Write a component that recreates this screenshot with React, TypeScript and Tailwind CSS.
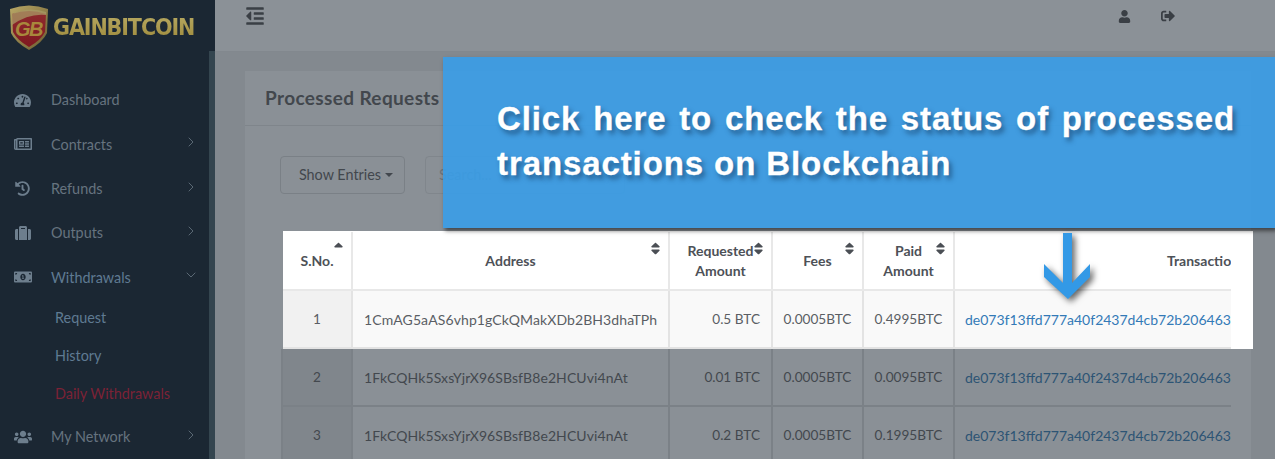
import { ChevronRight, ChevronDown } from 'lucide-react'
import { FaTachometerAlt, FaRegNewspaper, FaHistory, FaSuitcase, FaMoneyBillAlt, FaUsers, FaUser, FaSignOutAlt, FaOutdent, FaSort, FaSortUp } from 'react-icons/fa'

const lato = { fontFamily: 'Lato, sans-serif' }

const txHash = 'de073f13ffd777a40f2437d4cb72b2064630a1f7'

const rows = [
  { n: 1, address: '1CmAG5aAS6vhp1gCkQMakXDb2BH3dhaTPh', req: '0.5 BTC', paid: '0.4995BTC' },
  { n: 2, address: '1FkCQHk5SxsYjrX96SBsfB8e2HCUvi4nAt', req: '0.01 BTC', paid: '0.0095BTC' },
  { n: 3, address: '1FkCQHk5SxsYjrX96SBsfB8e2HCUvi4nAt', req: '0.2 BTC', paid: '0.1995BTC' },
]

function NavItem({ icon, label, chevron }: { icon: React.ReactNode; label: string; chevron?: 'right' | 'down' }) {
  return (
    <div className={`flex items-center h-[44.3px] pl-[14px] pr-[10px] ${chevron === 'down' ? 'text-[#5f7a92]' : 'text-[#66737f]'}`}>
      <span className="w-[37px] flex items-center text-[#6d7e8d]">{icon}</span>
      <span className="flex-1 text-[14.4px]">{label}</span>
      {chevron === 'right' && <ChevronRight size={16} strokeWidth={1.5} className="text-[#5a6874] -mt-[4px]" />}
      {chevron === 'down' && <ChevronDown size={16} strokeWidth={1.5} className="text-[#5a6874] -mt-[4px]" />}
    </div>
  )
}

function Sidebar() {
  return (
    <aside className="w-[215px] shrink-0 h-[459px] bg-[#1b2733] flex overflow-hidden">
      <div className="w-[209px]">
        <div className="h-[51px] flex items-center pl-[10px] pt-[3px]">
          <svg width="38" height="45" viewBox="0 0 38 45" className="shrink-0">
            <defs>
              <linearGradient id="rim" x1="0" y1="0" x2="1" y2="1">
                <stop offset="0" stopColor="#b9a866" />
                <stop offset="1" stopColor="#6b5c30" />
              </linearGradient>
              <linearGradient id="red" x1="0" y1="0" x2="0" y2="1">
                <stop offset="0" stopColor="#8f2b2e" />
                <stop offset="1" stopColor="#7f1820" />
              </linearGradient>
            </defs>
            <path d="M0 4 Q19 -3 38 4 L37 28 Q33 37 19 45 Q5 37 1 28 Z" fill="url(#rim)" />
            <path d="M2 9 Q19 3 36 9 L35 27 Q31 35 19 42 Q7 35 3 27 Z" fill="url(#red)" />
            <path d="M2 9 Q19 1 36 7 L36 10 Q19 8 2 20 Z" fill="#a89a66" opacity="0.75" />
            <text x="5" y="31" fontSize="20" fontWeight="700" fontStyle="italic" fill="#a8883c" fontFamily="Liberation Sans, sans-serif">G</text>
            <text x="19" y="31" fontSize="20" fontWeight="700" fontStyle="italic" fill="#a8883c" fontFamily="Liberation Sans, sans-serif">B</text>
          </svg>
          <span
            className="ml-[5px] text-[23px] font-bold tracking-[-1.1px] leading-none text-transparent bg-clip-text bg-gradient-to-b from-[#b5a75f] to-[#a08c3e]"
            style={{ fontFamily: '"DejaVu Sans Condensed", "DejaVu Sans", sans-serif' }}
          >
            GAINBITCOIN
          </span>
        </div>
        <nav className="pt-[27px]">
          <NavItem icon={<FaTachometerAlt size={17} />} label="Dashboard" />
          <NavItem icon={<FaRegNewspaper size={18} />} label="Contracts" chevron="right" />
          <NavItem icon={<FaHistory size={15} className="ml-[1px]" />} label="Refunds" chevron="right" />
          <NavItem icon={<FaSuitcase size={16} className="ml-[1px]" />} label="Outputs" chevron="right" />
          <NavItem icon={<FaMoneyBillAlt size={18} />} label="Withdrawals" chevron="down" />
          <div className="pl-[55px] text-[14.4px] text-[#5f7a92] -mt-[1px] mb-[2px]">
            <div className="h-[38px] flex items-center">Request</div>
            <div className="h-[38px] flex items-center">History</div>
            <div className="h-[38px] flex items-center text-[#7c2236]">Daily Withdrawals</div>
          </div>
          <NavItem icon={<FaUsers size={18} />} label="My Network" chevron="right" />
        </nav>
      </div>
      <div className="w-[6px] mt-[51px] bg-[#34454f]" />
    </aside>
  )
}

function HeadCell({ w, children, up }: { w: string; children: React.ReactNode; up?: boolean }) {
  return (
    <div className={`${w} shrink-0 relative flex items-center justify-center text-center font-bold leading-[20px] text-[14px] text-[#4d5157] border-r-2 border-[#e8e8e8]`}>
      {children}
      <span className="absolute top-[9px] right-[5px] text-[#4b4f55]">
        {up ? <FaSortUp size={15} /> : <FaSort size={15} />}
      </span>
    </div>
  )
}

function Row({ row, lit }: { row: (typeof rows)[number]; lit: boolean }) {
  const line = lit ? 'border-[#e3e3e3]' : 'border-[#7b8187]'
  const cell = `shrink-0 flex items-center border-r-2 ${line}`
  return (
    <div className={`flex h-[58px] border-b-2 text-[13.6px] ${line} ${lit ? 'bg-[#f9f9f9] text-[#5a5e64]' : 'text-[#43484e]'}`}>
      <div className={`${cell} w-[70px] justify-center ${lit ? 'bg-[#f1f1f1]' : 'bg-[#80868c]'}`}>{row.n}</div>
      <div className={`${cell} w-[317px] pl-[11px] text-[14px] tracking-[0.1px]`}>{row.address}</div>
      <div className={`${cell} w-[103px] justify-end pr-[11px]`}>{row.req}</div>
      <div className={`${cell} w-[91px] justify-center`}>0.0005BTC</div>
      <div className={`${cell} w-[91px] justify-center`}>{row.paid}</div>
      <div className={`pl-[10px] flex items-center whitespace-nowrap text-[14px] ${lit ? 'text-[#337ab7]' : 'text-[#2d5474]'}`}>{txHash}</div>
    </div>
  )
}

function RequestsTable() {
  return (
    <div className="ml-[38px] mt-[37px]">
      {/* header and first row are the lit part of the tour */}
      <div className="w-[970px] bg-white">
        <div className="w-[948px] overflow-hidden">
          <div className="w-[1100px]">
            <div className="flex h-[60px] pt-[1px] border-b-2 border-[#e8e8e8] bg-white">
              <HeadCell w="w-[70px]" up>S.No.</HeadCell>
              <HeadCell w="w-[317px]">Address</HeadCell>
              <HeadCell w="w-[103px]">Requested<br />Amount</HeadCell>
              <HeadCell w="w-[91px]">Fees</HeadCell>
              <HeadCell w="w-[91px]">Paid<br />Amount</HeadCell>
              <div className="pl-[212px] flex items-center font-bold text-[14px] text-[#4d5157]">Transaction</div>
            </div>
            <Row row={rows[0]} lit />
          </div>
        </div>
      </div>
      <div className="w-[950px] -ml-[2px] border-l-2 border-[#7b8187] overflow-hidden">
        <div className="w-[1100px]">
          <Row row={rows[1]} lit={false} />
          <Row row={rows[2]} lit={false} />
        </div>
      </div>
    </div>
  )
}

export default function App() {
  return (
    <div className="relative w-[1275px] h-[459px] overflow-hidden flex bg-[#83898f]" style={lato}>
      <Sidebar />
      <main className="flex-1 min-w-0">
        <header className="h-[52px] bg-[#8b9197] border-b border-[#82888e] flex items-start text-[#3a3f45]">
          <FaOutdent size={20} className="ml-[30px] mt-[6px]" />
          <div className="flex-1" />
          <FaUser size={13} className="mt-[10px]" />
          <FaSignOutAlt size={14} className="ml-[30px] mr-[100px] mt-[9px]" />
        </header>
        <section className="ml-[30px] mt-[19px] h-[400px] w-[1006px] bg-[#8a9096]">
          <div className="h-[55px] border-b border-[#7f858b] flex items-center pl-[20px] text-[19px] font-bold tracking-[0.37px] text-[#42474d]">Processed Requests</div>
          <div className="flex gap-[20px] pl-[35px] pt-[30px]">
            <div className="w-[125px] h-[38px] rounded-[4px] border border-[#7a8086] flex items-center justify-center pl-[7px] text-[14.4px] text-[#42474d]">
              Show Entries
              <span className="ml-[4px] border-x-[4px] border-t-[4px] border-x-transparent border-t-[#42474d]" />
            </div>
            <div className="w-[200px] h-[38px] rounded-[4px] border border-[#80868c] flex items-center pl-[13px] text-[14.4px] text-[#6d7379]">Search...</div>
          </div>
          <RequestsTable />
        </section>
      </main>
      {/* tour callout */}
      <div className="absolute left-[443px] top-[57px] right-0 h-[171px] bg-[#399de8]/90 shadow-[2px_3px_4px_rgba(0,0,0,0.5)] pl-[54px] pt-[39px]">
        <p
          className="w-[738px] text-[33px] font-bold leading-[45px] tracking-[0.9px] text-white text-justify [-webkit-text-stroke:0.3px_white] [text-shadow:3px_4px_5px_rgba(20,60,100,0.65)]"
          style={{ fontFamily: '"Liberation Sans", sans-serif' }}
        >
          Click here to check the status of processed transactions on Blockchain
        </p>
      </div>
      {/* arrow pointing at the hash column */}
      <svg width="46" height="66" viewBox="0 0 46 66" className="absolute left-[1044px] top-[233px] drop-shadow-[3px_3px_3px_rgba(0,0,0,0.6)]">
        <path d="M19 0 H28 V50 L46 31 V44 L24 66 L0 44 V31 L19 50 Z" fill="#3399e6" />
      </svg>
    </div>
  )
}
